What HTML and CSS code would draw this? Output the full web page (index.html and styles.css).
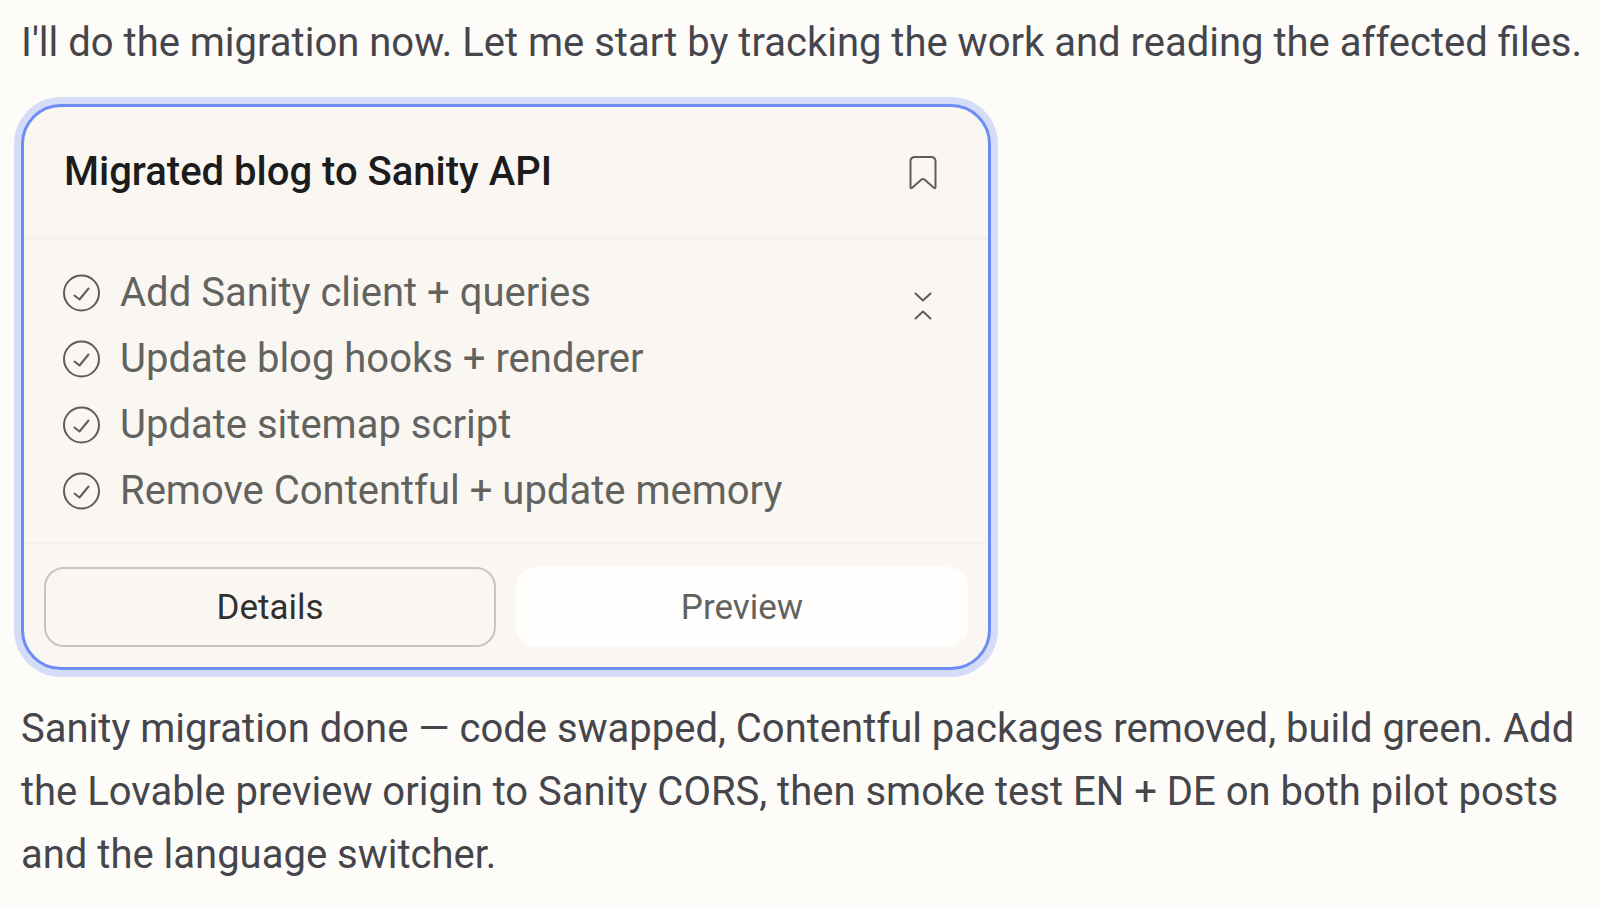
FILE: index.html
```html
<!DOCTYPE html>
<html lang="en">
<head>
    <meta charset="UTF-8">
    <meta name="viewport" content="width=device-width, initial-scale=1.0">
    <title>Migrated blog to Sanity API</title>
    <link rel="stylesheet" href="styles.css">
</head>
<body>
    <svg class="sprite" aria-hidden="true">
        <symbol id="check" viewBox="0 0 40 40">
            <circle cx="19.500" cy="20" r="17.500"/>
            <path d="M12.500 22.500L17.500 26.500L26.500 15.500"/>
        </symbol>
    </svg>

    <main class="chat">
        <p class="message">I'll do the migration now. Let me start by tracking the work and reading the affected files.</p>

        <section class="card">
            <header class="card-header">
                <h2>Migrated blog to Sanity API</h2>
                <button type="button" class="icon-button" aria-label="Bookmark">
                    <svg viewBox="0 0 40 40"><path d="M7.500 35V9.500Q7.500 5 12 5H28Q32.500 5 32.500 9.500V35Q32.500 37 30.500 35.500L21.500 27.500Q20 26.500 18.500 27.500L9.500 35.500Q7.500 37 7.500 35Z"/></svg>
                </button>
            </header>

            <div class="card-body">
                <ul class="tasks">
                    <li><svg><use href="#check"/></svg>Add Sanity client + queries</li>
                    <li><svg><use href="#check"/></svg>Update blog hooks + renderer</li>
                    <li><svg><use href="#check"/></svg>Update sitemap script</li>
                    <li><svg><use href="#check"/></svg>Remove Contentful + update memory</li>
                </ul>
                <button type="button" class="icon-button collapse" aria-label="Collapse">
                    <svg viewBox="0 0 40 40"><path d="M12.500 7.500L20 14.500L27.500 7.500M12.500 32.500L20 25.500L27.500 32.500"/></svg>
                </button>
            </div>

            <footer class="card-actions">
                <button type="button" class="details">Details</button>
                <button type="button" class="preview">Preview</button>
            </footer>
        </section>

        <p class="message">Sanity migration done — code swapped, Contentful packages removed, build green. Add the Lovable preview origin to Sanity CORS, then smoke test EN + DE on both pilot posts and the language switcher.</p>
    </main>
</body>
</html>
```
FILE: styles.css
```css
* {
    box-sizing: border-box;
}
body {
    margin: 0;
    background-color: #fdfcf8;
    color: #45454c;
    font-family: Roboto, Arial, sans-serif;
    font-size: 40px;
    line-height: 63px;
}
.sprite {
    display: none;
}
svg {
    display: block;
    width: 40px;
    height: 40px;
    flex: none;
    fill: none;
    stroke: #5d5e5a;
    stroke-width: 2;
    stroke-linecap: round;
    stroke-linejoin: round;
}
.chat {
    padding: 11px 8px 11px 21px;
}
.message {
    margin: 0;
}
.card {
    max-width: 970px;
    margin: 30px 0 27px;
    border: 3px solid #6c8df5;
    border-radius: 40px;
    background-color: #faf7f3;
    box-shadow: 0 0 0 7px #d4dcf8;
}
.card-header {
    display: flex;
    align-items: center;
    justify-content: space-between;
    padding: 33px 45px 34px 40px;
    border-bottom: 3px solid #f5f2ee;
}
.card-header h2 {
    margin: 0;
    color: #1c1c1c;
    font-size: 40px;
    font-weight: 500;
}
button {
    font-family: inherit;
    cursor: pointer;
}
.icon-button {
    padding: 0;
    border: none;
    background: none;
}
.card-body {
    display: flex;
    align-items: flex-start;
    justify-content: space-between;
    padding: 20px 45px 18px 38px;
    border-bottom: 3px solid #f5f2ee;
}
.tasks {
    margin: 0;
    padding: 0;
    list-style: none;
    color: #62635f;
    line-height: 66px;
}
.tasks li {
    display: flex;
    align-items: center;
    gap: 18px;
}
.collapse {
    margin-top: 26px;
}
.card-actions {
    display: grid;
    grid-template-columns: 1fr 1fr;
    gap: 20px;
    padding: 22px 20px 20px;
}
.card-actions button {
    height: 80px;
    border: 2px solid transparent;
    border-radius: 20px;
    font-size: 35px;
}
.card-actions .details {
    border-color: #c6c6c1;
    background: none;
    color: #30302f;
}
.card-actions .preview {
    background-color: #fffefd;
    color: #62635f;
}
```
